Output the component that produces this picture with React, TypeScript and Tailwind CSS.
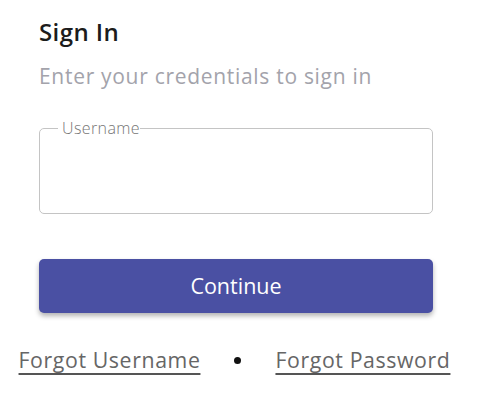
export default function App() {
  return (
    <div className="w-[477px] h-[414px] bg-white" style={{ fontFamily: '"Open Sans", sans-serif' }}>
      <div className="flex flex-col w-[394px] ml-[39px] pt-[16px]">
        <h1 className="text-[24px] font-semibold text-[#1c1c1c] leading-[32px] tracking-[0.4px]">Sign In</h1>
        <p className="mt-[14px] text-[21px] text-[#a3a3ab] leading-[28px] tracking-[0.7px]">Enter your credentials to sign in</p>
        <fieldset className="mt-[30px] h-[94px] border border-[#c4c4c4] rounded-[5px] pl-[18px]">
          <legend className="pl-[4px] pr-0 text-[16px] font-light text-[#757575] leading-[16px] tracking-[0.4px]">Username</legend>
        </fieldset>
        <button className="mt-[45px] h-[54px] w-full rounded-[5px] bg-[#4a50a3] text-white text-[21.5px] shadow-[0_3px_5px_rgba(0,0,0,0.3)]">
          Continue
        </button>
      </div>
      <div className="mt-[32px] pr-[8px] flex items-center justify-center gap-[34px] text-[21.3px] leading-[30px] text-[#666] tracking-[0.6px]">
        <a className="underline decoration-[#555] decoration-2 underline-offset-[5px]">Forgot Username</a>
        <span className="w-[7px] h-[7px] rounded-full bg-[#111]" />
        <a className="underline decoration-[#555] decoration-2 underline-offset-[5px]">Forgot Password</a>
      </div>
    </div>
  );
}
